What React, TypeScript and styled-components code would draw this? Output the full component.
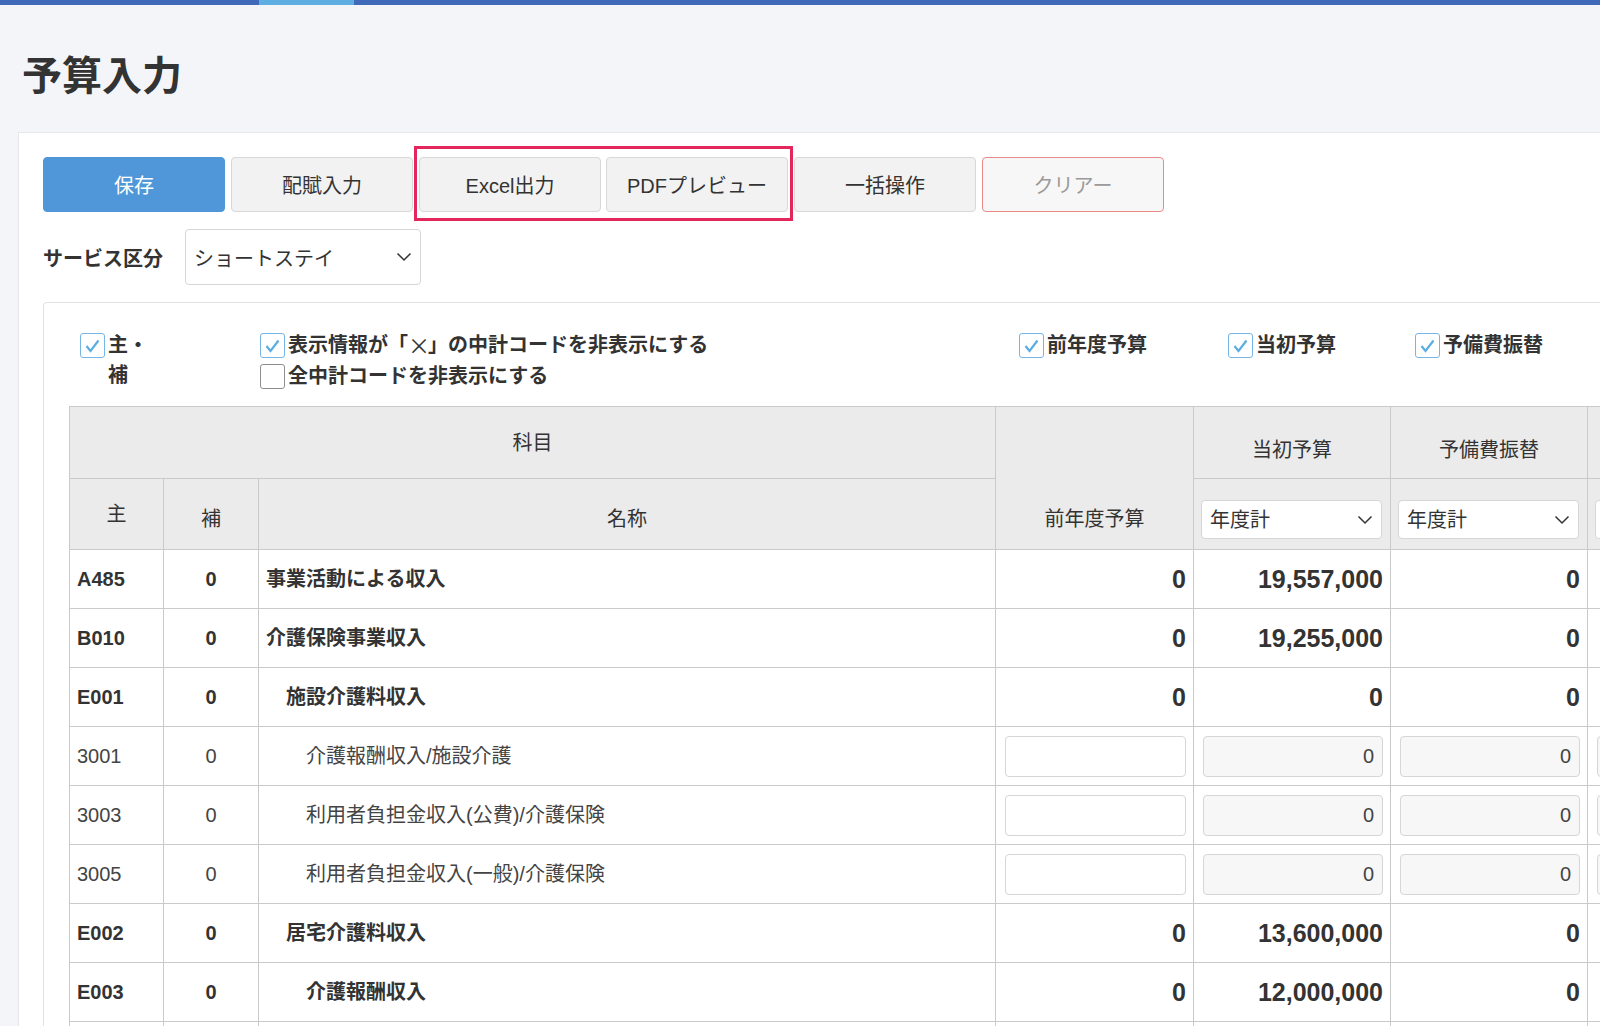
import React from "react";
import styled, { createGlobalStyle } from "styled-components";

const GlobalStyle = createGlobalStyle`
  html, body {
    margin: 0;
    padding: 0;
    background: #f4f5f9;
    overflow: hidden;
  }
  body {
    font-family: "Liberation Sans", "Noto Sans CJK JP", sans-serif;
    color: #333;
  }
  * { box-sizing: border-box; }
`;

const Page = styled.div`
  width: 1600px;
  height: 1026px;
  overflow: hidden;
`;

const TopBar = styled.div`
  height: 5px;
  background: linear-gradient(
    to right,
    #4069b9 259px,
    #5eaee3 259px,
    #5eaee3 354px,
    #4069b9 354px
  );
`;

const Title = styled.h1`
  margin: 47px 0 32px 22px;
  font-size: 40px;
  line-height: 48px;
  font-weight: bold;
  color: #333;
`;

const Panel = styled.div`
  margin-left: 18px;
  width: 2000px;
  min-height: 900px;
  background: #fff;
  border: 1px solid #e6e7eb;
  border-right: none;
  padding: 24px 24px;
`;

const Toolbar = styled.div`
  display: flex;
  gap: 6px;
  height: 55px;
`;

const Highlight = styled.div`
  position: relative;
  display: flex;
  gap: 5px;

  &::after {
    content: "";
    position: absolute;
    top: -11px;
    bottom: -9px;
    left: -5px;
    right: -5px;
    border: 3px solid #e3265c;
    pointer-events: none;
  }
`;

type Variant = "primary" | "default" | "danger";

const Button = styled.button<{ $variant?: Variant }>`
  width: 182px;
  height: 55px;
  border-radius: 4px;
  font-family: inherit;
  font-size: 20px;
  cursor: pointer;
  border: 1px solid
    ${(p) =>
      p.$variant === "primary"
        ? "#4f97d8"
        : p.$variant === "danger"
        ? "#e98a8a"
        : "#d8d8d8"};
  background: ${(p) =>
    p.$variant === "primary"
      ? "#4f97d8"
      : p.$variant === "danger"
      ? "#f7f7f7"
      : "#f2f2f2"};
  color: ${(p) =>
    p.$variant === "primary"
      ? "#fff"
      : p.$variant === "danger"
      ? "#9a9a9a"
      : "#333"};
`;

const FieldRow = styled.div`
  display: flex;
  align-items: center;
  margin-top: 17px;
`;

const FieldLabel = styled.span`
  width: 142px;
  font-size: 20px;
  font-weight: bold;
`;

const SelectBox = styled.div<{ $width: number; $height: number }>`
  width: ${(p) => p.$width}px;
  height: ${(p) => p.$height}px;
  display: flex;
  align-items: center;
  justify-content: space-between;
  padding: 0 8px 0 8px;
  background: #fff;
  border: 1px solid #d6d6d6;
  border-radius: 4px;
  font-size: 20px;
  color: #333;
  text-align: left;
`;

const Chevron = () => (
  <svg width="16" height="10" viewBox="0 0 16 10">
    <polyline
      points="1.5,1.5 8,8 14.5,1.5"
      fill="none"
      stroke="#333"
      strokeWidth="1.5"
    />
  </svg>
);

const Select = ({
  value,
  width,
  height,
}: {
  value: string;
  width: number;
  height: number;
}) => (
  <SelectBox $width={width} $height={height}>
    <span>{value}</span>
    <Chevron />
  </SelectBox>
);

const InnerPanel = styled.div`
  margin-top: 17px;
  border: 1px solid #e2e2e2;
  border-right: none;
  border-radius: 4px 0 0 4px;
  padding: 27px 25px 0 25px;
  min-height: 760px;
`;

const Options = styled.div`
  display: flex;
  align-items: flex-start;
  padding-left: 11px;
`;

const OptionGroup = styled.div<{ $width?: number }>`
  ${(p) => (p.$width ? `width: ${p.$width}px;` : "")}
  flex-shrink: 0;
  display: flex;
  flex-direction: column;
  gap: 1px;
`;

const CheckRow = styled.label`
  display: flex;
  align-items: flex-start;
  gap: 3px;
  height: 30px;
  font-size: 20px;
  font-weight: bold;
  line-height: 30px;
  color: #333;

  &:first-child:last-child {
    height: auto;
  }
`;

const Box = styled.span<{ $checked: boolean }>`
  flex-shrink: 0;
  width: 25px;
  height: 25px;
  margin-top: 3px;
  border-radius: 3px;
  border: 1px solid ${(p) => (p.$checked ? "#76b6e6" : "#8e8e8e")};
  background: #fff;
  display: flex;
  align-items: center;
  justify-content: center;
`;

const CheckText = styled.span<{ $width?: number }>`
  ${(p) => (p.$width ? `width: ${p.$width}px;` : "")}
`;

const Cross = styled.span`
  font-family: "Noto Sans CJK JP", sans-serif;
  font-weight: normal;
  font-size: 22px;
  line-height: 20px;
  display: inline-block;
  width: 20px;
  text-align: center;
  vertical-align: top;
  margin-top: 4px;
`;

const Check = ({
  checked,
  label,
  width,
}: {
  checked: boolean;
  label: React.ReactNode;
  width?: number;
}) => (
  <CheckRow>
    <Box $checked={checked}>
      {checked && (
        <svg width="17" height="17" viewBox="0 0 17 17">
          <polyline
            points="2.5,9 6.5,14 14.5,3.5"
            fill="none"
            stroke="#5aaee3"
            strokeWidth="2.2"
          />
        </svg>
      )}
    </Box>
    <CheckText $width={width}>{label}</CheckText>
  </CheckRow>
);

const Table = styled.table`
  margin-top: 15px;
  border-collapse: collapse;
  table-layout: fixed;
  width: 1715px;
`;

const Th = styled.th<{ $valign?: string; $pt?: number; $pb?: number }>`
  background: #ebebeb;
  border: 1px solid #cacaca;
  font-size: 20px;
  font-weight: normal;
  color: #333;
  line-height: 24px;
  vertical-align: ${(p) => p.$valign || "middle"};
  padding: ${(p) => p.$pt ?? 0}px 7px ${(p) => p.$pb ?? 0}px 7px;
`;

const HeadRow = styled.tr<{ $height: number }>`
  height: ${(p) => p.$height}px;
`;

const BodyRow = styled.tr`
  height: 59px;
`;

const Td = styled.td<{
  $bold?: boolean;
  $align?: "left" | "center" | "right";
  $big?: boolean;
  $indent?: number;
}>`
  border: 1px solid #cacaca;
  background: #fff;
  font-size: ${(p) => (p.$big ? 25 : 20)}px;
  font-weight: ${(p) => (p.$bold ? "bold" : "normal")};
  color: ${(p) => (p.$bold ? "#333" : "#444")};
  text-align: ${(p) => p.$align || "left"};
  padding: 0 7px 0 ${(p) => 7 + (p.$indent || 0) * 20}px;
  line-height: 28px;
  white-space: nowrap;
  overflow: hidden;
`;

const InputCell = styled.td`
  border: 1px solid #cacaca;
  background: #fff;
  padding: 0 7px 0 9px;
`;

const Input = styled.input<{ $readonly?: boolean }>`
  display: block;
  width: 100%;
  height: 41px;
  border: 1px solid #d6d6d6;
  border-radius: 4px;
  background: ${(p) => (p.$readonly ? "#f7f7f7" : "#fff")};
  font-family: inherit;
  font-size: 20px;
  color: #444;
  text-align: right;
  padding: 0 8px;
  outline: none;
`;

type Row = {
  code: string;
  name: string;
  level: number;
  bold?: boolean;
  values?: string[];
};

const rows: Row[] = [
  { code: "A485", name: "事業活動による収入", level: 0, bold: true, values: ["0", "19,557,000", "0", "0"] },
  { code: "B010", name: "介護保険事業収入", level: 0, bold: true, values: ["0", "19,255,000", "0", "0"] },
  { code: "E001", name: "施設介護料収入", level: 1, bold: true, values: ["0", "0", "0", "0"] },
  { code: "3001", name: "介護報酬収入/施設介護", level: 2 },
  { code: "3003", name: "利用者負担金収入(公費)/介護保険", level: 2 },
  { code: "3005", name: "利用者負担金収入(一般)/介護保険", level: 2 },
  { code: "E002", name: "居宅介護料収入", level: 1, bold: true, values: ["0", "13,600,000", "0", "0"] },
  { code: "E003", name: "介護報酬収入", level: 2, bold: true, values: ["0", "12,000,000", "0", "0"] },
  { code: "3101", name: "介護報酬収入/居宅介護", level: 3 },
];

const colWidths = [94, 95, 737, 198, 197, 197, 197];

export default function App() {
  return (
    <Page>
      <GlobalStyle />
      <TopBar />
      <Title>予算入力</Title>
      <Panel>
        <Toolbar>
          <Button $variant="primary">保存</Button>
          <Button>配賦入力</Button>
          <Highlight>
            <Button>Excel出力</Button>
            <Button>PDFプレビュー</Button>
          </Highlight>
          <Button>一括操作</Button>
          <Button $variant="danger">クリアー</Button>
        </Toolbar>

        <FieldRow>
          <FieldLabel>サービス区分</FieldLabel>
          <Select value="ショートステイ" width={236} height={56} />
        </FieldRow>

        <InnerPanel>
          <Options>
            <OptionGroup $width={180}>
              <Check checked label="主・補" width={44} />
            </OptionGroup>
            <OptionGroup $width={759}>
              <Check
                checked
                label={
                  <>
                    表示情報が「<Cross>×</Cross>」の中計コードを非表示にする
                  </>
                }
              />
              <Check checked={false} label="全中計コードを非表示にする" />
            </OptionGroup>
            <OptionGroup $width={209}>
              <Check checked label="前年度予算" />
            </OptionGroup>
            <OptionGroup $width={187}>
              <Check checked label="当初予算" />
            </OptionGroup>
            <OptionGroup>
              <Check checked label="予備費振替" />
            </OptionGroup>
          </Options>

          <Table>
            <colgroup>
              {colWidths.map((w, i) => (
                <col key={i} style={{ width: w }} />
              ))}
            </colgroup>
            <thead>
              <HeadRow $height={72}>
                <Th colSpan={3}>科目</Th>
                <Th rowSpan={2} $valign="bottom" $pb={18}>
                  前年度予算
                </Th>
                <Th $pt={14}>当初予算</Th>
                <Th $pt={14}>予備費振替</Th>
                <Th $pt={14} />
              </HeadRow>
              <HeadRow $height={71}>
                <Th>主</Th>
                <Th $valign="bottom" $pb={18}>
                  補
                </Th>
                <Th $valign="bottom" $pb={18}>
                  名称
                </Th>
                {[0, 1, 2].map((i) => (
                  <Th key={i} $valign="bottom" $pb={10}>
                    <Select value="年度計" width={181} height={39} />
                  </Th>
                ))}
              </HeadRow>
            </thead>
            <tbody>
              {rows.map((r) => (
                <BodyRow key={r.code}>
                  <Td $bold={r.bold}>{r.code}</Td>
                  <Td $bold={r.bold} $align="center">
                    0
                  </Td>
                  <Td $bold={r.bold} $indent={r.level}>
                    {r.name}
                  </Td>
                  {r.values ? (
                    r.values.map((v, i) => (
                      <Td key={i} $bold $big $align="right">
                        {v}
                      </Td>
                    ))
                  ) : (
                    <>
                      <InputCell>
                        <Input defaultValue="" />
                      </InputCell>
                      <InputCell>
                        <Input $readonly readOnly defaultValue="0" />
                      </InputCell>
                      <InputCell>
                        <Input $readonly readOnly defaultValue="0" />
                      </InputCell>
                      <InputCell>
                        <Input $readonly readOnly defaultValue="0" />
                      </InputCell>
                    </>
                  )}
                </BodyRow>
              ))}
            </tbody>
          </Table>
        </InnerPanel>
      </Panel>
    </Page>
  );
}
